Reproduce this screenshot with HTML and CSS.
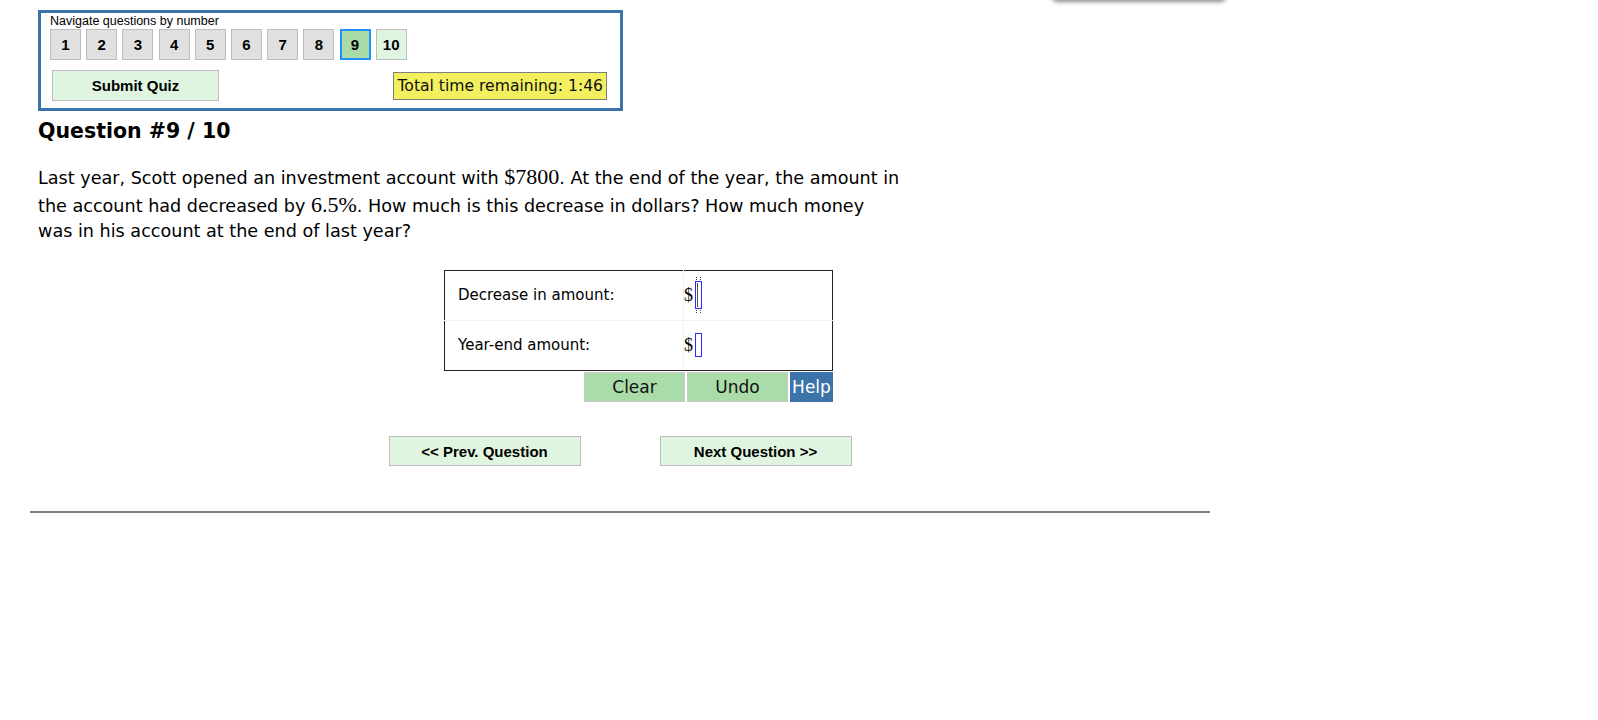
FILE: index.html
```html
<!DOCTYPE html>
<html lang="en">
<head>
  <meta charset="UTF-8">
  <title>Quiz - Question 9</title>
  <link rel="stylesheet" href="styles.css">
</head>
<body>
  <div class="menu-shadow"></div>

  <div class="page">
    <div class="quiz">
      <div class="navbox">
        <div class="nav-label">Navigate questions by number</div>
        <div class="nav-nums">
          <button class="num">1</button>
          <button class="num">2</button>
          <button class="num">3</button>
          <button class="num">4</button>
          <button class="num">5</button>
          <button class="num">6</button>
          <button class="num">7</button>
          <button class="num">8</button>
          <button class="num current">9</button>
          <button class="num open">10</button>
        </div>
        <div class="nav-foot">
          <button class="submit">Submit Quiz</button>
          <span class="timer">Total time remaining: 1:46</span>
        </div>
      </div>

      <h3 class="q-title">Question #9 / 10</h3>

      <p class="q-text">Last year, Scott opened an investment account with <span class="math">$7800</span>. At the end of the year, the amount in the account had decreased by <span class="math">6.5%</span>. How much is this decrease in dollars? How much money was in his account at the end of last year?</p>

      <div class="answer">
        <table class="answer-table">
          <tr>
            <td class="label">Decrease in amount:</td>
            <td class="field"><span class="dollar">$</span><span class="box focused"><span class="cursor"></span></span></td>
          </tr>
          <tr>
            <td class="label">Year-end amount:</td>
            <td class="field"><span class="dollar">$</span><span class="box"></span></td>
          </tr>
        </table>
        <div class="tools">
          <button class="tool">Clear</button>
          <button class="tool">Undo</button>
          <button class="help">Help</button>
        </div>
      </div>

      <div class="pager">
        <button class="page-btn">&lt;&lt; Prev. Question</button>
        <button class="page-btn">Next Question &gt;&gt;</button>
      </div>
    </div>
    <hr class="rule">
  </div>
</body>
</html>
```

FILE: styles.css
```css
body { margin: 0; background: #fff; color: #000; font-family: "DejaVu Sans", Verdana, sans-serif; }
button { font-family: "Liberation Sans", Arial, sans-serif; cursor: pointer; }

/* dropdown that hangs just above the top edge */
.menu-shadow { position: absolute; top: -40px; left: 1052px; width: 174px; height: 40px; background: #fff; box-shadow: 0 1px 4px 1px rgba(0,0,0,0.45); border-radius: 0 0 6px 6px; }

.page { width: 1180px; margin-left: 30px; }
.quiz { padding-left: 8px; padding-top: 10px; }

.navbox { width: 560px; border: 3px solid #3a74a9; padding: 1px 10px 7px 9px; }
.nav-label { font-family: "Liberation Sans", Arial, sans-serif; font-size: 12.5px; line-height: 15px; }
.nav-nums { display: flex; gap: 5.2px; }
.num { width: 31px; height: 31px; padding: 0; background: #e0e0e0; border: 1px solid #bdbdbd; font-size: 15px; font-weight: bold; color: #000; }
.num.current { background: #a8dba8; border: 2px solid #1e90ff; }
.num.open { background: #e0f5e0; }

.nav-foot { display: flex; justify-content: space-between; align-items: center; margin-top: 10px; }
.submit { margin-left: 2px; width: 167px; height: 31px; background: #e0f5e0; border: 1px solid #bdbdbd; font-size: 15px; font-weight: bold; color: #000; }
.timer { margin-right: 3px; background: #f2f05e; border: 1px solid #7f7f7f; font-size: 15.6px; line-height: 26px; padding: 0 3px; color: #111; }

.q-title { margin: 8.3px 0 0; font-size: 20.5px; font-weight: bold; line-height: 24px; }

.q-text { width: 865px; margin: 19.3px 0 0; font-size: 17.6px; line-height: 25px; }
.math { font-family: "Liberation Serif", "Times New Roman", serif; font-size: 22px; line-height: 28px; }

.answer { width: 389px; margin: 26.4px 0 0 406px; }
.answer-table { width: 100%; border-collapse: collapse; border: 1px solid #222; }
.answer-table td { height: 49px; padding: 0; border: 1px solid #f2f2f2; }
.answer-table tr:first-child td { border-top-color: #222; }
.answer-table tr:last-child td { border-bottom-color: #222; }
.answer-table td:first-child { border-left-color: #222; }
.answer-table td:last-child { border-right-color: #222; }
.label { width: 225px; padding-left: 13px !important; font-size: 15px; }
.field { font-size: 0; }
.dollar { font-family: "Liberation Serif", "Times New Roman", serif; font-size: 18px; vertical-align: middle; }
.box { display: inline-block; position: relative; width: 5px; height: 22px; border: 1px solid #2b2bff; vertical-align: middle; margin-left: 2px; }
.box.focused { height: 26px; }
.box.focused .cursor { position: absolute; left: 1px; top: 1px; width: 1px; height: 24px; background: #555; }
.box.focused::before, .box.focused::after { content: ""; position: absolute; left: 0; width: 5px; height: 3px; border-left: 1px dotted #444; border-right: 1px dotted #444; box-sizing: border-box; }
.box.focused::before { top: -5px; }
.box.focused::after { bottom: -5px; }

.tools { display: flex; justify-content: flex-end; gap: 2px; margin-top: 1.5px; }
.tool { width: 101px; height: 30px; background: #a9dca9; border: 1px solid #c8c8c8; font-family: "DejaVu Sans", Verdana, sans-serif; font-size: 17px; color: #111; padding: 0; }
.help { width: 43px; height: 30px; background: #3b74a8; border: 0; color: #fff; font-family: "DejaVu Sans", Verdana, sans-serif; font-size: 17px; padding: 0; }

.pager { display: flex; justify-content: center; gap: 79px; margin-top: 34px; margin-left: -8px; }
.page-btn { width: 192px; height: 30px; background: #e0f5e0; border: 1px solid #bdbdbd; font-size: 15px; font-weight: bold; color: #000; }

.rule { margin: 45px 0 0; border: 0; border-top: 2px solid #808080; }
```
